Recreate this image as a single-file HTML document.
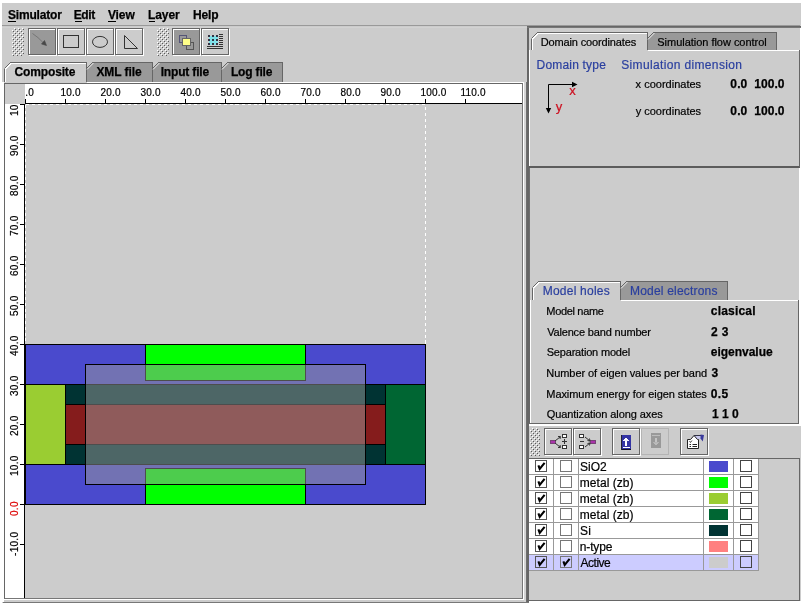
<!DOCTYPE html>
<html><head><meta charset="utf-8"><title>Simulator</title>
<style>
html,body{margin:0;padding:0;}
body{width:804px;height:606px;background:#fff;position:relative;overflow:hidden;font-family:"Liberation Sans",sans-serif;font-size:12px;color:#000;}
div,span{position:absolute;box-sizing:border-box;white-space:nowrap;}
.b{font-weight:bold;}
.frame{left:2px;top:3px;width:799px;height:600px;background:#ccc;}
.menu{letter-spacing:-0.15px;font-weight:bold;font-size:12px;top:8.500px;height:14px;line-height:14px;}
.menu u{text-decoration:none;border-bottom:1px solid #000;display:inline-block;line-height:12px;}
.btn{width:28px;height:27px;top:28px;border:1px solid #666;border-right-color:#666;background:#ccc;box-shadow:1px 1px 0 #fff, inset 1px 1px 0 #fff;}
.btn.sel{background:#999;}
.btn.dis{border-color:#b4b4b4;}
.grip{background-image:radial-gradient(circle at 1px 1px,#fff 0.8px,transparent 1.1px),radial-gradient(circle at 3px 3px,#fff 0.8px,transparent 1.1px),radial-gradient(circle at 2px 2px,#888 0.8px,transparent 1.1px),radial-gradient(circle at 4px 4px,#888 0.8px,transparent 1.1px);background-size:4px 4px;}
.tab{height:19px;background:#999;font-weight:bold;font-size:12px;line-height:17px;text-align:center;border-top:1px solid #666;border-right:1px solid #666;}
.tab.sel{background:#ccc;border-left:1px solid #fff;border-top:1px solid #fff;}
.tab2{height:18px;background:#999;font-size:11px;line-height:17px;text-align:center;border-top:1px solid #666;border-right:1px solid #666;}
.tab2.sel{background:#ccc;}
.pane{border:1px solid #666;box-shadow:inset 1px 1px 0 #fff, 1px 1px 0 #fff;}
.rl{-webkit-text-stroke:0.2px;letter-spacing:0.2px;font-size:10px;line-height:12px;height:12px;}
.vl{-webkit-text-stroke:0.2px;letter-spacing:0.3px;font-size:10px;line-height:10px;height:10px;transform-origin:0 0;transform:rotate(-90deg);}
.lab{font-size:11px;line-height:13px;}
.val{font-size:12px;font-weight:bold;line-height:14px;}
.blue{color:#2a3f9f;}
.cb{width:12px;height:12px;border:1px solid #666;box-shadow:inset 1px 1px 0 #fff,1px 1px 0 #fff;background:#ccc;}
.cbw{width:12px;height:12px;border:1px solid #555;background:#fff;}
</style></head><body>
<div class="frame"></div>
<div id="layer" style="left:0;top:0;width:804px;height:606px;will-change:transform;">

<div style="left:2px;top:25px;width:798px;height:1px;background:#999"></div>
<div style="left:2px;top:27px;width:525px;height:1px;background:#d2d2d2"></div>
<div style="left:7.95px;top:8px;height:14px;line-height:14px;font-size:12px;font-weight:bold;-webkit-text-stroke:0.25px;color:#000;letter-spacing:-0.177px">Simulator</div>
<div style="left:8px;top:21px;width:8px;height:1px;background:#000"></div>
<div style="left:73.70px;top:8px;height:14px;line-height:14px;font-size:12px;font-weight:bold;-webkit-text-stroke:0.25px;color:#000;letter-spacing:-0.405px">Edit</div>
<div style="left:75px;top:21px;width:7px;height:1px;background:#000"></div>
<div style="left:107.92px;top:8px;height:14px;line-height:14px;font-size:12px;font-weight:bold;-webkit-text-stroke:0.25px;color:#000;letter-spacing:-0.096px">View</div>
<div style="left:108px;top:21px;width:8px;height:1px;background:#000"></div>
<div style="left:147.95px;top:8px;height:14px;line-height:14px;font-size:12px;font-weight:bold;-webkit-text-stroke:0.25px;color:#000;letter-spacing:-0.072px">Layer</div>
<div style="left:149px;top:21px;width:6px;height:1px;background:#000"></div>
<div style="left:192.95px;top:8px;height:14px;line-height:14px;font-size:12px;font-weight:bold;-webkit-text-stroke:0.25px;color:#000;letter-spacing:-0.153px">Help</div>
<svg width="12" height="28" style="position:absolute;left:12px;top:28px" shape-rendering="crispEdges"><defs><pattern id="gp1" x="0" y="0" width="4" height="4" patternUnits="userSpaceOnUse"><rect x="2" y="0" width="1" height="1" fill="#fff"/><rect x="0" y="2" width="1" height="1" fill="#fff"/><rect x="3" y="1" width="1" height="1" fill="#5a5a5a"/><rect x="1" y="3" width="1" height="1" fill="#5a5a5a"/></pattern></defs><rect width="12" height="28" fill="url(#gp1)"/></svg>
<svg width="12" height="28" style="position:absolute;left:157px;top:28px" shape-rendering="crispEdges"><defs><pattern id="gp2" x="0" y="0" width="4" height="4" patternUnits="userSpaceOnUse"><rect x="2" y="0" width="1" height="1" fill="#fff"/><rect x="0" y="2" width="1" height="1" fill="#fff"/><rect x="3" y="1" width="1" height="1" fill="#5a5a5a"/><rect x="1" y="3" width="1" height="1" fill="#5a5a5a"/></pattern></defs><rect width="12" height="28" fill="url(#gp2)"/></svg>
<div class="btn sel" style="left:28px;width:28px"><svg width="27" height="26" style="position:absolute;left:0;top:0"><path d="M3.500 4.500 Q9 8 14.500 14" stroke="#666" stroke-width="1" fill="none" opacity="0.7"/><path d="M15.500 11.500 L17.500 16.500 L12.500 15 Z" fill="#484848" stroke="#484848" stroke-width="0.6"/></svg></div>
<div class="btn" style="left:57px;width:28px"><svg width="27" height="26" style="position:absolute;left:0;top:0"><rect x="5.500" y="6.500" width="15" height="12" fill="none" stroke="#333"/></svg></div>
<div class="btn" style="left:86px;width:28px"><svg width="27" height="26" style="position:absolute;left:0;top:0"><ellipse cx="13" cy="12.900" rx="7.500" ry="5.500" fill="none" stroke="#333"/></svg></div>
<div class="btn" style="left:115px;width:28px"><svg width="27" height="26" style="position:absolute;left:0;top:0"><path d="M8.5 6.5 L8.5 19.5 L21.5 19.5 Z" fill="none" stroke="#333"/></svg></div>
<div class="btn sel" style="left:172px;width:28px"><svg width="27" height="26" style="position:absolute;left:0;top:0"><rect x="6.5" y="6.5" width="7" height="7" fill="none" stroke="#557"/><rect x="13.5" y="13.5" width="7" height="7" fill="none" stroke="#555"/><rect x="9.5" y="9.5" width="8" height="7" fill="#ffff88" stroke="#666"/></svg></div>
<div class="btn" style="left:201px;width:28px"><svg width="27" height="26" style="position:absolute;left:0;top:0"><rect x="7" y="7" width="9" height="9" fill="#7fe0e8"/><rect x="6" y="6" width="2" height="2" fill="#334"/><rect x="10" y="6" width="2" height="2" fill="#334"/><rect x="14" y="6" width="2" height="2" fill="#334"/><rect x="6" y="10" width="2" height="2" fill="#334"/><rect x="10" y="10" width="2" height="2" fill="#334"/><rect x="14" y="10" width="2" height="2" fill="#334"/><rect x="6" y="14" width="2" height="2" fill="#334"/><rect x="10" y="14" width="2" height="2" fill="#334"/><rect x="14" y="14" width="2" height="2" fill="#334"/><rect x="17" y="5" width="4" height="1" fill="#333"/><rect x="17" y="7" width="4" height="1" fill="#333"/><rect x="17" y="9" width="4" height="1" fill="#333"/><rect x="17" y="11" width="4" height="1" fill="#333"/><rect x="17" y="13" width="4" height="1" fill="#333"/><rect x="17" y="15" width="4" height="1" fill="#333"/><rect x="5" y="17" width="16" height="1" fill="#333"/><rect x="5" y="19" width="16" height="1" fill="#333"/></svg></div>
<div style="left:2px;top:82px;width:2px;height:520px;background:#fff"></div>
<div style="left:87px;top:82px;width:437px;height:1px;background:#fff"></div>
<div style="left:4px;top:83px;width:519px;height:516px;border:1px solid #666;border-right-color:#777;border-bottom-color:#777"></div>
<div style="left:523px;top:83px;width:1px;height:517px;background:#fff"></div>
<div style="left:4px;top:599px;width:520px;height:1px;background:#fff"></div>
<svg width="280" height="20" style="position:absolute;left:4px;top:62px" shape-rendering="crispEdges"><path d="M0.5 20 V6.5 L6.5 .5 H82.5 V20" fill="#ccc" stroke="none"/><path d="M1.5 20 V7 L7 1.5 H82" fill="none" stroke="#fff"/><path d="M0.5 20 V6.5" fill="none" stroke="#666"/><path d="M0.5 6.5 L6.5 .5" fill="none" stroke="#666" shape-rendering="auto"/><path d="M6 .5 H82.5 V20" fill="none" stroke="#666"/><path d="M83 20 V7 L89 1 H148.5 V20 Z" fill="#999" stroke="none" shape-rendering="auto"/><path d="M83 7.500 L89.5 1" fill="none" stroke="#e8e8e8" shape-rendering="auto"/><path d="M82.5 6.500 L88.5 .5" fill="none" stroke="#666" shape-rendering="auto"/><path d="M88 .5 H148.5 V20" fill="none" stroke="#666"/><path d="M149 20 V7 L155 1 H217.5 V20 Z" fill="#999" stroke="none" shape-rendering="auto"/><path d="M149 7.500 L155.5 1" fill="none" stroke="#e8e8e8" shape-rendering="auto"/><path d="M148.5 6.500 L154.5 .5" fill="none" stroke="#666" shape-rendering="auto"/><path d="M154 .5 H217.5 V20" fill="none" stroke="#666"/><path d="M218 20 V7 L224 1 H278.5 V20 Z" fill="#999" stroke="none" shape-rendering="auto"/><path d="M218 7.500 L224.5 1" fill="none" stroke="#e8e8e8" shape-rendering="auto"/><path d="M217.5 6.500 L223.5 .5" fill="none" stroke="#666" shape-rendering="auto"/><path d="M223 .5 H278.5 V20" fill="none" stroke="#666"/></svg>
<div style="left:14.51px;top:65px;height:14px;line-height:14px;font-size:12px;font-weight:bold;-webkit-text-stroke:0.25px;color:#000;letter-spacing:-0.138px">Composite</div>
<div style="left:96.39px;top:65px;height:14px;line-height:14px;font-size:12px;font-weight:bold;-webkit-text-stroke:0.25px;color:#000;letter-spacing:-0.069px">XML file</div>
<div style="left:160.70px;top:65px;height:14px;line-height:14px;font-size:12px;font-weight:bold;-webkit-text-stroke:0.25px;color:#000;letter-spacing:-0.164px">Input file</div>
<div style="left:230.90px;top:65px;height:14px;line-height:14px;font-size:12px;font-weight:bold;-webkit-text-stroke:0.25px;color:#000;letter-spacing:-0.164px">Log file</div>
<div style="left:5px;top:84px;width:20px;height:20px;background:#ccc"></div>
<div style="left:25px;top:84px;width:497px;height:19px;background:#fff"></div>
<div style="left:25px;top:103px;width:497px;height:1px;background:#000"></div>
<div style="left:5px;top:104px;width:19px;height:494px;background:#fff"></div>
<div style="left:24px;top:104px;width:1px;height:494px;background:#000"></div>
<div style="left:25px;top:104px;width:497px;height:494px;background:#ccc"></div>
<div style="left:25px;top:99px;width:1px;height:4px;background:#000"></div>
<div style="left:25px;top:87px;width:20px;height:12px;overflow:hidden"><div class="rl" style="left:-5.500px;top:0">0.0</div></div>
<div style="left:65px;top:99px;width:1px;height:4px;background:#000"></div>
<div class="rl" style="left:60.5px;top:87px">10.0</div>
<div style="left:105px;top:99px;width:1px;height:4px;background:#000"></div>
<div class="rl" style="left:100.5px;top:87px">20.0</div>
<div style="left:145px;top:99px;width:1px;height:4px;background:#000"></div>
<div class="rl" style="left:140.5px;top:87px">30.0</div>
<div style="left:185px;top:99px;width:1px;height:4px;background:#000"></div>
<div class="rl" style="left:180.5px;top:87px">40.0</div>
<div style="left:225px;top:99px;width:1px;height:4px;background:#000"></div>
<div class="rl" style="left:220.5px;top:87px">50.0</div>
<div style="left:265px;top:99px;width:1px;height:4px;background:#000"></div>
<div class="rl" style="left:260.5px;top:87px">60.0</div>
<div style="left:305px;top:99px;width:1px;height:4px;background:#000"></div>
<div class="rl" style="left:300.5px;top:87px">70.0</div>
<div style="left:345px;top:99px;width:1px;height:4px;background:#000"></div>
<div class="rl" style="left:340.5px;top:87px">80.0</div>
<div style="left:385px;top:99px;width:1px;height:4px;background:#000"></div>
<div class="rl" style="left:380.5px;top:87px">90.0</div>
<div style="left:425px;top:99px;width:1px;height:4px;background:#000"></div>
<div class="rl" style="left:420.5px;top:87px">100.0</div>
<div style="left:465px;top:99px;width:1px;height:4px;background:#000"></div>
<div class="rl" style="left:460.5px;top:87px">110.0</div>
<div style="left:20px;top:544px;width:4px;height:1px;background:#000"></div>
<div class="vl" style="left:9.500px;top:555.5px;">-10.0</div>
<div style="left:20px;top:504px;width:4px;height:1px;background:#000"></div>
<div class="vl" style="left:9.500px;top:515.5px;color:#d00;">0.0</div>
<div style="left:20px;top:464px;width:4px;height:1px;background:#000"></div>
<div class="vl" style="left:9.500px;top:475.5px;">10.0</div>
<div style="left:20px;top:424px;width:4px;height:1px;background:#000"></div>
<div class="vl" style="left:9.500px;top:435.5px;">20.0</div>
<div style="left:20px;top:384px;width:4px;height:1px;background:#000"></div>
<div class="vl" style="left:9.500px;top:395.5px;">30.0</div>
<div style="left:20px;top:344px;width:4px;height:1px;background:#000"></div>
<div class="vl" style="left:9.500px;top:355.5px;">40.0</div>
<div style="left:20px;top:304px;width:4px;height:1px;background:#000"></div>
<div class="vl" style="left:9.500px;top:315.5px;">50.0</div>
<div style="left:20px;top:264px;width:4px;height:1px;background:#000"></div>
<div class="vl" style="left:9.500px;top:275.5px;">60.0</div>
<div style="left:20px;top:224px;width:4px;height:1px;background:#000"></div>
<div class="vl" style="left:9.500px;top:235.5px;">70.0</div>
<div style="left:20px;top:184px;width:4px;height:1px;background:#000"></div>
<div class="vl" style="left:9.500px;top:195.5px;">80.0</div>
<div style="left:20px;top:144px;width:4px;height:1px;background:#000"></div>
<div class="vl" style="left:9.500px;top:155.5px;">90.0</div>
<div style="left:20px;top:104px;width:4px;height:1px;background:#000"></div>
<div style="left:5px;top:105px;width:19px;height:20px;overflow:hidden"><div class="vl" style="left:4.500px;top:10.5px;">100.0</div></div>
<svg width="497" height="493" style="position:absolute;left:25px;top:104px" shape-rendering="crispEdges">
<path d="M0.5 0.5 H400.5 V400.5" fill="none" stroke="#fff" stroke-dasharray="3 3"/>
<path d="M0.5 0.5 V400.5 H400.5" fill="none" stroke="#fff" stroke-dasharray="3 3"/>
<rect x="0.5" y="240.5" width="400" height="160" fill="#4a4acd" stroke="#000"/>
<rect x="120.5" y="240.5" width="160" height="36" fill="#00ff00" stroke="#000"/>
<rect x="120.5" y="364.5" width="160" height="36" fill="#00ff00" stroke="#000"/>
<rect x="0.5" y="280.5" width="40" height="80" fill="#9acd32" stroke="#000"/>
<rect x="360.5" y="280.5" width="40" height="80" fill="#006633" stroke="#000"/>
<rect x="40.5" y="280.5" width="320" height="80" fill="#003333" stroke="#000"/>
<rect x="40.5" y="300.5" width="320" height="40" fill="#851c1c" stroke="#000"/>
<rect x="60.5" y="260.5" width="280" height="120" fill="rgba(153,153,153,0.5)" stroke="#000"/>
</svg>
<div style="left:524px;top:82px;width:2px;height:520px;background:#d4d4d4"></div>
<div style="left:527px;top:26px;width:2px;height:577px;background:#666"></div>
<div style="left:526px;top:82px;width:1px;height:521px;background:#6e6e6e"></div>
<div style="left:529px;top:168px;width:1px;height:256px;background:#6e6e6e"></div>
<div style="left:527px;top:26px;width:274px;height:1px;background:#666"></div>
<div style="left:527px;top:27px;width:274px;height:1px;background:#777"></div>
<div style="left:800px;top:28px;width:4px;height:396px;background:#fff"></div>
<div style="left:799px;top:168px;width:1px;height:256px;background:#fff"></div>
<div style="left:3px;top:602px;width:526px;height:1px;background:#777"></div>
<div style="left:529px;top:601px;width:275px;height:2px;background:#fff"></div>
<div style="left:529px;top:50px;width:271px;height:118px;border:1px solid #666;border-bottom:2px solid #5c5c5c;border-left:none;border-top:none"></div>
<div style="left:529px;top:50px;width:1px;height:116px;background:#fff"></div>
<div style="left:648px;top:50px;width:151px;height:1px;background:#fff"></div>
<svg width="247" height="18" style="position:absolute;left:531px;top:32px" shape-rendering="crispEdges"><path d="M0.5 18 V6.5 L6.5 .5 H116.5 V18" fill="#ccc" stroke="none"/><path d="M1.5 18 V7 L7 1.5 H116" fill="none" stroke="#fff"/><path d="M0.5 18 V6.5" fill="none" stroke="#666"/><path d="M0.5 6.5 L6.5 .5" fill="none" stroke="#666" shape-rendering="auto"/><path d="M6 .5 H116.5 V18" fill="none" stroke="#666"/><path d="M117 18 V7 L123 1 H245.5 V18 Z" fill="#999" stroke="none" shape-rendering="auto"/><path d="M117 7.500 L123.5 1" fill="none" stroke="#e8e8e8" shape-rendering="auto"/><path d="M116.5 6.500 L122.5 .5" fill="none" stroke="#666" shape-rendering="auto"/><path d="M122 .5 H245.5 V18" fill="none" stroke="#666"/></svg>
<div style="left:540.80px;top:36px;height:12px;line-height:12px;font-size:11px;-webkit-text-stroke:0.2px;color:#000;letter-spacing:-0.143px">Domain coordinates</div>
<div style="left:657.30px;top:36px;height:12px;line-height:12px;font-size:11px;-webkit-text-stroke:0.2px;color:#000;letter-spacing:-0.028px">Simulation flow control</div>
<div style="left:536.52px;top:58px;height:14px;line-height:14px;font-size:12px;-webkit-text-stroke:0.2px;color:#2a3f9f;letter-spacing:0.195px">Domain type</div>
<div style="left:621.16px;top:58px;height:14px;line-height:14px;font-size:12px;-webkit-text-stroke:0.2px;color:#2a3f9f;letter-spacing:0.356px">Simulation dimension</div>
<svg width="40" height="40" style="position:absolute;left:540px;top:78px"><path d="M8.5 31 V6.5 H33" fill="none" stroke="#000"/><path d="M32 3.8 L37.500 6.500 L32 9.200 Z" fill="#000"/><path d="M5.800 30 L8.500 35.500 L11.200 30 Z" fill="#000"/></svg>
<div style="left:569.35px;top:83px;height:15px;line-height:15px;font-size:13px;-webkit-text-stroke:0.2px;color:#cc1020;letter-spacing:0.000px">x</div>
<div style="left:555.77px;top:99px;height:15px;line-height:15px;font-size:13px;-webkit-text-stroke:0.2px;color:#cc1020;letter-spacing:0.000px">y</div>
<div style="left:635.58px;top:78px;height:12px;line-height:12px;font-size:11px;-webkit-text-stroke:0.2px;color:#000;letter-spacing:0.008px">x coordinates</div>
<div style="left:635.67px;top:105px;height:12px;line-height:12px;font-size:11px;-webkit-text-stroke:0.2px;color:#000;letter-spacing:-0.000px">y coordinates</div>
<div style="left:730.33px;top:77px;height:14px;line-height:14px;font-size:12px;font-weight:bold;-webkit-text-stroke:0.25px;color:#000;letter-spacing:0.143px">0.0</div>
<div style="left:754.24px;top:77px;height:14px;line-height:14px;font-size:12px;font-weight:bold;-webkit-text-stroke:0.25px;color:#000;letter-spacing:0.055px">100.0</div>
<div style="left:730.33px;top:104px;height:14px;line-height:14px;font-size:12px;font-weight:bold;-webkit-text-stroke:0.25px;color:#000;letter-spacing:0.143px">0.0</div>
<div style="left:754.24px;top:104px;height:14px;line-height:14px;font-size:12px;font-weight:bold;-webkit-text-stroke:0.25px;color:#000;letter-spacing:0.055px">100.0</div>
<div style="left:529px;top:300px;width:270px;height:124px;border:1px solid #666;border-top:none"></div>
<div style="left:530px;top:300px;width:1px;height:123px;background:#fff"></div>
<div style="left:621px;top:300px;width:177px;height:1px;background:#fff"></div>
<div style="left:529px;top:424px;width:275px;height:2px;background:#fff"></div>
<svg width="197" height="19" style="position:absolute;left:532px;top:281px" shape-rendering="crispEdges"><path d="M0.5 19 V6.5 L6.5 .5 H88.5 V19" fill="#ccc" stroke="none"/><path d="M1.5 19 V7 L7 1.5 H88" fill="none" stroke="#fff"/><path d="M0.5 19 V6.5" fill="none" stroke="#666"/><path d="M0.5 6.5 L6.5 .5" fill="none" stroke="#666" shape-rendering="auto"/><path d="M6 .5 H88.5 V19" fill="none" stroke="#666"/><path d="M89 19 V7 L95 1 H195.5 V19 Z" fill="#999" stroke="none" shape-rendering="auto"/><path d="M89 7.500 L95.5 1" fill="none" stroke="#e8e8e8" shape-rendering="auto"/><path d="M88.5 6.500 L94.5 .5" fill="none" stroke="#666" shape-rendering="auto"/><path d="M94 .5 H195.5 V19" fill="none" stroke="#666"/></svg>
<div style="left:542.72px;top:284px;height:14px;line-height:14px;font-size:12px;-webkit-text-stroke:0.2px;color:#2a3f9f;letter-spacing:0.231px">Model holes</div>
<div style="left:630.02px;top:284px;height:14px;line-height:14px;font-size:12px;-webkit-text-stroke:0.2px;color:#2a3f9f;letter-spacing:0.193px">Model electrons</div>
<div style="left:546.30px;top:305px;height:12px;line-height:12px;font-size:11px;-webkit-text-stroke:0.2px;color:#000;letter-spacing:-0.327px">Model name</div>
<div style="left:710.83px;top:304px;height:14px;line-height:14px;font-size:12px;font-weight:bold;-webkit-text-stroke:0.25px;color:#000;letter-spacing:0.192px">clasical</div>
<div style="left:547.15px;top:326px;height:12px;line-height:12px;font-size:11px;-webkit-text-stroke:0.2px;color:#000;letter-spacing:-0.167px">Valence band number</div>
<div style="left:710.88px;top:325px;height:14px;line-height:14px;font-size:12px;font-weight:bold;-webkit-text-stroke:0.25px;color:#000;letter-spacing:0.384px">2 3</div>
<div style="left:546.70px;top:346px;height:12px;line-height:12px;font-size:11px;-webkit-text-stroke:0.2px;color:#000;letter-spacing:-0.186px">Separation model</div>
<div style="left:710.83px;top:345px;height:14px;line-height:14px;font-size:12px;font-weight:bold;-webkit-text-stroke:0.25px;color:#000;letter-spacing:-0.028px">eigenvalue</div>
<div style="left:546.30px;top:367px;height:12px;line-height:12px;font-size:11px;-webkit-text-stroke:0.2px;color:#000;letter-spacing:-0.062px">Number of eigen values per band</div>
<div style="left:711.52px;top:366px;height:14px;line-height:14px;font-size:12px;font-weight:bold;-webkit-text-stroke:0.25px;color:#000;letter-spacing:0.000px">3</div>
<div style="left:546.30px;top:388px;height:12px;line-height:12px;font-size:11px;-webkit-text-stroke:0.2px;color:#000;letter-spacing:-0.071px">Maximum energy for eigen states</div>
<div style="left:710.83px;top:387px;height:14px;line-height:14px;font-size:12px;font-weight:bold;-webkit-text-stroke:0.25px;color:#000;letter-spacing:0.363px">0.5</div>
<div style="left:546.68px;top:408px;height:12px;line-height:12px;font-size:11px;-webkit-text-stroke:0.2px;color:#000;letter-spacing:-0.091px">Quantization along axes</div>
<div style="left:712.04px;top:407px;height:14px;line-height:14px;font-size:12px;font-weight:bold;-webkit-text-stroke:0.25px;color:#000;letter-spacing:-0.010px">1 1 0</div>
<div style="left:529px;top:424px;width:270px;height:1px;background:#fff"></div>
<svg width="10" height="28" style="position:absolute;left:530px;top:428px" shape-rendering="crispEdges"><defs><pattern id="gp3" x="0" y="0" width="4" height="4" patternUnits="userSpaceOnUse"><rect x="2" y="0" width="1" height="1" fill="#fff"/><rect x="0" y="2" width="1" height="1" fill="#fff"/><rect x="3" y="1" width="1" height="1" fill="#5a5a5a"/><rect x="1" y="3" width="1" height="1" fill="#5a5a5a"/></pattern></defs><rect width="10" height="28" fill="url(#gp3)"/></svg>
<div class="btn" style="left:544px;top:428px;width:28px;height:27px"><svg width="27" height="26" style="position:absolute;left:0;top:0"><rect x="5" y="11" width="5" height="4" fill="#a3a"/><rect x="5.5" y="11.5" width="5" height="3" fill="none" stroke="#747" stroke-width="1"/><path d="M10 12 L15 8 M10 14 L15 18 M13 7.5 L15.5 7.5 L15 10 M13 18.5 L15.5 18.5 L15 16" stroke="#333" fill="none"/><rect x="17.5" y="5.5" width="4" height="3" fill="#fff" stroke="#333"/><rect x="17.5" y="16.5" width="4" height="3" fill="#fff" stroke="#333"/><path d="M17 12.5 H22 M19.5 10 V15" stroke="#333"/></svg></div>
<div class="btn" style="left:573px;top:428px;width:28px;height:27px"><svg width="27" height="26" style="position:absolute;left:0;top:0"><rect x="16" y="11" width="5" height="4" fill="#a3a"/><rect x="16.5" y="11.5" width="5" height="3" fill="none" stroke="#747"/><path d="M11 8 L16 12 M11 18 L16 14 M13.5 11.5 L16 12 L15.5 9.5 M13.500 14.5 L16 14 L15.5 16.500" stroke="#333" fill="none"/><rect x="5.5" y="5.500" width="4" height="3" fill="#fff" stroke="#333"/><rect x="5.500" y="16.500" width="4" height="3" fill="#fff" stroke="#333"/><path d="M6 12.500 H10" stroke="#333"/></svg></div>
<div class="btn" style="left:612px;top:428px;width:28px;height:27px"><svg width="27" height="26" style="position:absolute;left:0;top:0" shape-rendering="crispEdges"><rect x="8" y="6" width="10" height="15" fill="#3434a4"/><rect x="8" y="20" width="10" height="1" fill="#112"/><rect x="8" y="6" width="1" height="15" fill="#223"/><rect x="12" y="9" width="2" height="8" fill="#fff"/><rect x="11" y="10" width="4" height="1" fill="#fff"/><rect x="10" y="11" width="6" height="1" fill="#eef"/><rect x="10" y="18" width="7" height="1" fill="#fff"/></svg></div>
<div class="btn dis" style="left:641px;top:428px;width:28px;height:27px;box-shadow:none"><svg width="27" height="26" style="position:absolute;left:0;top:0" shape-rendering="crispEdges"><rect x="9" y="4" width="10" height="15" fill="#999"/><rect x="10" y="6" width="8" height="1" fill="#bdbdbd"/><rect x="13" y="9" width="2" height="6" fill="#c4c4c4"/><rect x="11" y="13" width="6" height="1" fill="#b4b4b4"/><rect x="12" y="14" width="4" height="1" fill="#bbb"/><rect x="13" y="15" width="2" height="1" fill="#bbb"/></svg></div>
<div class="btn" style="left:680px;top:428px;width:28px;height:27px"><svg width="27" height="26" style="position:absolute;left:0;top:0"><path d="M13 7 H20 V10 H16 Z" fill="#c8c8ee"/><path d="M6.500 10.500 H9.500 L13 6.500 L16.500 10.500 H17.500 V19.500 H6.500 Z" fill="#fff" stroke="#222"/><path d="M13 6.500 H20" stroke="#334" fill="none"/><path d="M19.500 5.500 L23 6 L21.800 12.500 L19.500 9.500 Z" fill="#3a3a9c"/><path d="M8.500 15.500 H10 M11.500 15.500 H16 M8.500 17.500 H10 M11.500 17.500 H16" stroke="#222"/><path d="M8.500 12 L9.500 13.500 L11 11.500" stroke="#222" fill="none" stroke-width="0.8"/></svg></div>
<div style="left:529px;top:458px;width:271px;height:143px;border-top:1px solid #666;border-right:1px solid #666;border-bottom:1px solid #666"></div>
<div style="left:529px;top:459px;width:229px;height:15px;background:#fff"></div>
<div style="left:529px;top:474px;width:230px;height:1px;background:#999"></div>
<div class="cbw" style="left:535px;top:460px;background:#fff"><svg width="10" height="10" style="position:absolute;left:0;top:0"><path d="M2.400 4.300 L3.700 7.800 L8.600 1.800" stroke="#000" stroke-width="2.100" fill="none"/></svg></div>
<div class="cbw" style="left:560px;top:460px;background:#fff;border-color:#777"></div>
<div style="left:580.06px;top:460px;height:14px;line-height:14px;font-size:12px;-webkit-text-stroke:0.2px;color:#000;letter-spacing:-0.043px">SiO2</div>
<div style="left:709px;top:461px;width:19px;height:11px;background:#4a4acd"></div>
<div class="cbw" style="left:740px;top:460px;background:#fff;border-color:#444"></div>
<div style="left:529px;top:475px;width:229px;height:15px;background:#fff"></div>
<div style="left:529px;top:490px;width:230px;height:1px;background:#999"></div>
<div class="cbw" style="left:535px;top:476px;background:#fff"><svg width="10" height="10" style="position:absolute;left:0;top:0"><path d="M2.400 4.300 L3.700 7.800 L8.600 1.800" stroke="#000" stroke-width="2.100" fill="none"/></svg></div>
<div class="cbw" style="left:560px;top:476px;background:#fff;border-color:#777"></div>
<div style="left:579.80px;top:476px;height:14px;line-height:14px;font-size:12px;-webkit-text-stroke:0.2px;color:#000;letter-spacing:0.044px">metal (zb)</div>
<div style="left:709px;top:477px;width:19px;height:11px;background:#00ff00"></div>
<div class="cbw" style="left:740px;top:476px;background:#fff;border-color:#444"></div>
<div style="left:529px;top:491px;width:229px;height:15px;background:#fff"></div>
<div style="left:529px;top:506px;width:230px;height:1px;background:#999"></div>
<div class="cbw" style="left:535px;top:492px;background:#fff"><svg width="10" height="10" style="position:absolute;left:0;top:0"><path d="M2.400 4.300 L3.700 7.800 L8.600 1.800" stroke="#000" stroke-width="2.100" fill="none"/></svg></div>
<div class="cbw" style="left:560px;top:492px;background:#fff;border-color:#777"></div>
<div style="left:579.80px;top:492px;height:14px;line-height:14px;font-size:12px;-webkit-text-stroke:0.2px;color:#000;letter-spacing:0.044px">metal (zb)</div>
<div style="left:709px;top:493px;width:19px;height:11px;background:#9acd32"></div>
<div class="cbw" style="left:740px;top:492px;background:#fff;border-color:#444"></div>
<div style="left:529px;top:507px;width:229px;height:15px;background:#fff"></div>
<div style="left:529px;top:522px;width:230px;height:1px;background:#999"></div>
<div class="cbw" style="left:535px;top:508px;background:#fff"><svg width="10" height="10" style="position:absolute;left:0;top:0"><path d="M2.400 4.300 L3.700 7.800 L8.600 1.800" stroke="#000" stroke-width="2.100" fill="none"/></svg></div>
<div class="cbw" style="left:560px;top:508px;background:#fff;border-color:#777"></div>
<div style="left:579.80px;top:508px;height:14px;line-height:14px;font-size:12px;-webkit-text-stroke:0.2px;color:#000;letter-spacing:0.044px">metal (zb)</div>
<div style="left:709px;top:509px;width:19px;height:11px;background:#006633"></div>
<div class="cbw" style="left:740px;top:508px;background:#fff;border-color:#444"></div>
<div style="left:529px;top:523px;width:229px;height:15px;background:#fff"></div>
<div style="left:529px;top:538px;width:230px;height:1px;background:#999"></div>
<div class="cbw" style="left:535px;top:524px;background:#fff"><svg width="10" height="10" style="position:absolute;left:0;top:0"><path d="M2.400 4.300 L3.700 7.800 L8.600 1.800" stroke="#000" stroke-width="2.100" fill="none"/></svg></div>
<div class="cbw" style="left:560px;top:524px;background:#fff;border-color:#777"></div>
<div style="left:580.06px;top:524px;height:14px;line-height:14px;font-size:12px;-webkit-text-stroke:0.2px;color:#000;letter-spacing:0.184px">Si</div>
<div style="left:709px;top:525px;width:19px;height:11px;background:#003333"></div>
<div class="cbw" style="left:740px;top:524px;background:#fff;border-color:#444"></div>
<div style="left:529px;top:539px;width:229px;height:15px;background:#fff"></div>
<div style="left:529px;top:554px;width:230px;height:1px;background:#999"></div>
<div class="cbw" style="left:535px;top:540px;background:#fff"><svg width="10" height="10" style="position:absolute;left:0;top:0"><path d="M2.400 4.300 L3.700 7.800 L8.600 1.800" stroke="#000" stroke-width="2.100" fill="none"/></svg></div>
<div class="cbw" style="left:560px;top:540px;background:#fff;border-color:#777"></div>
<div style="left:579.80px;top:540px;height:14px;line-height:14px;font-size:12px;-webkit-text-stroke:0.2px;color:#000;letter-spacing:-0.164px">n-type</div>
<div style="left:709px;top:541px;width:19px;height:11px;background:#ff8080"></div>
<div class="cbw" style="left:740px;top:540px;background:#fff;border-color:#444"></div>
<div style="left:529px;top:555px;width:229px;height:15px;background:#ccccff"></div>
<div style="left:529px;top:570px;width:230px;height:1px;background:#999"></div>
<div class="cbw" style="left:535px;top:556px;background:#ccccff"><svg width="10" height="10" style="position:absolute;left:0;top:0"><path d="M2.400 4.300 L3.700 7.800 L8.600 1.800" stroke="#000" stroke-width="2.100" fill="none"/></svg></div>
<div class="cbw" style="left:560px;top:556px;background:#ccccff;border-color:#777"><svg width="10" height="10" style="position:absolute;left:0;top:0"><path d="M2.400 4.300 L3.700 7.800 L8.600 1.800" stroke="#000" stroke-width="2.100" fill="none"/></svg></div>
<div style="left:580.58px;top:556px;height:14px;line-height:14px;font-size:12px;-webkit-text-stroke:0.2px;color:#000;letter-spacing:-0.504px">Active</div>
<div style="left:709px;top:557px;width:19px;height:11px;background:#cccccc"></div>
<div class="cbw" style="left:740px;top:556px;background:#ccccff;border-color:#444"></div>
<div style="left:553px;top:459px;width:1px;height:112px;background:#999"></div>
<div style="left:578px;top:459px;width:1px;height:112px;background:#999"></div>
<div style="left:703px;top:459px;width:1px;height:112px;background:#999"></div>
<div style="left:733px;top:459px;width:1px;height:112px;background:#999"></div>
<div style="left:758px;top:459px;width:1px;height:112px;background:#999"></div>
</div></body></html>
